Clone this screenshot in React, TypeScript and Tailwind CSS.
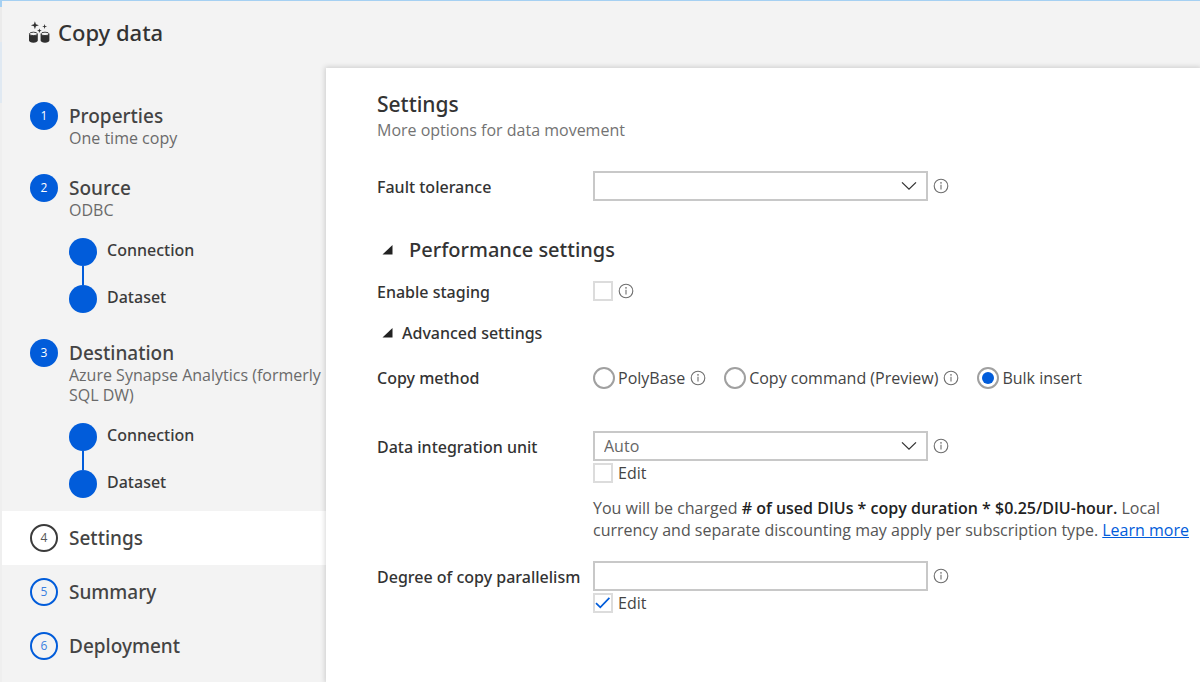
import { useId, useState, type ReactNode } from "react";

type Status = "done" | "current" | "pending";

interface Step {
  title: string;
  detail?: string;
  status: Status;
  children?: string[];
}

const steps: Step[] = [
  { title: "Properties", detail: "One time copy", status: "done" },
  { title: "Source", detail: "ODBC", status: "done", children: ["Connection", "Dataset"] },
  {
    title: "Destination",
    detail: "Azure Synapse Analytics (formerly SQL DW)",
    status: "done",
    children: ["Connection", "Dataset"],
  },
  { title: "Settings", status: "current" },
  { title: "Summary", status: "pending" },
  { title: "Deployment", status: "pending" },
];

const badgeStyles: Record<Status, string> = {
  done: "bg-[#015cda] text-white",
  current: "border-2 border-[#3b3b3b] text-[#555555]",
  pending: "border-2 border-[#015cda] text-[#3b7fe0]",
};

function CopyDataIcon() {
  return (
    <svg width="22" height="24" viewBox="0 0 22 24" aria-hidden="true" className="shrink-0 text-[#2f2f2f]" fill="currentColor">
      <path d="M6.9 1.2 L7.9 4.2 L10.9 5.2 L7.9 6.2 L6.9 9.2 L5.9 6.2 L2.9 5.2 L5.9 4.2Z" />
      <path d="M16.6 4 L17.2 5.9 L19.1 6.5 L17.2 7.1 L16.6 9 L16 7.1 L14.1 6.5 L16 5.9Z" />
      <path d="M11.4 8.4 L12 10.1 L13.7 10.7 L12 11.3 L11.4 13 L10.8 11.3 L9.1 10.7 L10.8 10.1Z" />
      {[1, 12.6].map((x) => (
        <g key={x} transform={`translate(${x} 0)`}>
          <path d="M0 14 V20.6 C0 21.8 1.9 22.7 4.4 22.7 S8.8 21.8 8.8 20.6 V14Z" />
          <ellipse cx="4.4" cy="13.9" rx="4" ry="1.7" fill="#f3f3f3" stroke="currentColor" strokeWidth="0.9" />
        </g>
      ))}
    </svg>
  );
}

function InfoIcon() {
  return (
    <svg width="16" height="16" viewBox="0 0 16 16" role="img" aria-label="Information" className="shrink-0 text-[#6e6e6e]">
      <circle cx="8" cy="8" r="6.8" fill="none" stroke="currentColor" strokeWidth="1.1" />
      <path d="M8 6.8V11.4" stroke="currentColor" strokeWidth="1.1" />
      <circle cx="8" cy="4.9" r="0.8" fill="currentColor" />
    </svg>
  );
}

function Chevron() {
  return (
    <svg width="16" height="10" viewBox="0 0 16 10" fill="none" aria-hidden="true" className="pointer-events-none absolute top-1/2 right-[11px] -translate-y-1/2 text-[#333333]">
      <path d="M1 1.4 L8 8.2 L15 1.4" stroke="currentColor" strokeWidth="1.3" />
    </svg>
  );
}

function Select({ id, options }: { id: string; options: string[] }) {
  return (
    <div className="relative w-[335px]">
      <select id={id} className="block h-[30px] w-full appearance-none rounded-none border-2 border-[#c8c8c8] bg-white pr-8 pl-[9px] text-[16px] leading-6 text-[#666666]">
        {options.map((option) => (
          <option key={option}>{option}</option>
        ))}
      </select>
      <Chevron />
    </div>
  );
}

function Checkbox({ id, label, defaultChecked }: { id?: string; label?: string; defaultChecked?: boolean }) {
  const ownId = useId();
  const boxId = id ?? ownId;
  return (
    <div className="flex h-5 items-center gap-[5px]">
      <span className="relative block size-5">
        <input id={boxId} type="checkbox" defaultChecked={defaultChecked} className="peer block size-5 appearance-none border-2 border-[#dcdcdc] bg-white" />
        <svg viewBox="0 0 20 20" fill="none" aria-hidden="true" className="pointer-events-none absolute inset-0 hidden size-5 text-[#015cda] peer-checked:block">
          <path d="M3 10.2 L7.3 14.4 L16.4 4.8" stroke="currentColor" strokeWidth="1.7" />
        </svg>
      </span>
      {label && <label htmlFor={boxId} className="leading-6">{label}</label>}
    </div>
  );
}

function Radio({ label, checked, onSelect, info }: { label: string; checked: boolean; onSelect: () => void; info?: boolean }) {
  return (
    <div className="flex items-center gap-[5px]">
      <label className="flex items-center gap-[3px]">
        <span className="relative block size-[22px]">
          <input type="radio" name="copy-method" checked={checked} onChange={onSelect} className="peer block size-[22px] appearance-none rounded-full border-2 border-[#a0a0a0] bg-white" />
          <span className="pointer-events-none absolute inset-[5px] hidden rounded-full bg-[#015cda] peer-checked:block" />
        </span>
        {label}
      </label>
      {info && <InfoIcon />}
    </div>
  );
}

function Field({ label, htmlFor, className, children }: { label: string; htmlFor: string; className: string; children: ReactNode }) {
  return (
    <div className={`flex items-start ${className}`}>
      <label htmlFor={htmlFor} className="w-[216px] shrink-0 pt-1 pb-[2px] font-['Noto_Sans',sans-serif] leading-6 font-medium whitespace-nowrap text-[#333333]">
        {label}
      </label>
      <div className="min-w-0 flex-1">{children}</div>
    </div>
  );
}

function Triangle() {
  return (
    <svg width="11" height="11" viewBox="0 0 11 11" aria-hidden="true" className="shrink-0 text-[#222222]">
      <path d="M10.5 0V9.5H0.5Z" fill="currentColor" />
    </svg>
  );
}

function Sidebar() {
  return (
    <nav aria-label="Steps" className="w-[324px] shrink-0 pt-[21px]">
      <ol>
        {steps.map((step, index) => (
          <li key={step.title} aria-current={step.status === "current" ? "step" : undefined} className={`flex items-start gap-[11px] py-[13px] pl-7 ${step.status === "current" ? "bg-white" : ""}`}>
            <span className={`flex size-7 shrink-0 items-center justify-center rounded-full text-[12px] ${badgeStyles[step.status]}`}>{index + 1}</span>
            <div className="min-w-0 flex-1 pt-[2px]">
              <h2 className="font-['Noto_Sans',sans-serif] text-[19px] leading-6 font-medium text-[#444444]">{step.title}</h2>
              {step.detail && <p className="leading-5 text-[#6a6a6a]">{step.detail}</p>}
              {step.children && (
                <ul className="mt-[18px]">
                  {step.children.map((child, i) => (
                    <li key={child} className="flex gap-[10px]">
                      <span className="flex flex-col items-center">
                        <span className="size-7 rounded-full bg-[#015cda]" />
                        {i < step.children!.length - 1 && <span className="h-[19px] w-[2px] bg-[#015cda]" />}
                      </span>
                      <a href="#" className="h-6 font-['Noto_Sans',sans-serif] leading-6 font-medium text-[#3b3b3b]">{child}</a>
                    </li>
                  ))}
                </ul>
              )}
            </div>
          </li>
        ))}
      </ol>
    </nav>
  );
}

export default function App() {
  const [method, setMethod] = useState("Bulk insert");
  return (
    <div className="flex min-h-screen border-t border-[#a5d0f2] bg-[#f3f3f3] font-['Open_Sans',sans-serif] text-[16px] text-[#444444]">
      <div aria-hidden="true" className="w-[2px] shrink-0 bg-[linear-gradient(#a5d0f2_6px,#ebebeb_6px,#ebebeb_41px,#e0e9f2_41px,#e0e9f2_102px,#efefef_102px)]" />
      <div className="flex min-w-0 flex-1 flex-col">
        <header className="flex h-[67px] shrink-0 items-center gap-2 pb-[6px] pl-[26px]">
          <CopyDataIcon />
          <h1 className="font-['Noto_Sans',sans-serif] text-[22px] leading-8 font-medium text-[#333333]">Copy data</h1>
        </header>
        <div className="flex flex-1">
          <Sidebar />
          <main className="min-w-0 flex-1 bg-white pt-[22px] pb-6 pl-[51px] shadow-[0_0_5px_1px_rgba(0,0,0,0.16)]">
            <h2 className="font-['Noto_Sans',sans-serif] text-[21px] leading-7 font-medium text-[#333333]">Settings</h2>
            <p className="leading-6 text-[#737373]">More options for data movement</p>

            <Field label="Fault tolerance" htmlFor="fault" className="mt-[29px]">
              <div className="flex items-center gap-[5px]">
                <Select id="fault" options={[""]} />
                <InfoIcon />
              </div>
            </Field>

            <h3 className="mt-[33px]">
              <button type="button" aria-expanded="true" className="flex items-center gap-4 pl-[5px] font-['Noto_Sans',sans-serif] text-[20px] leading-8 font-medium text-[#333333]">
                <Triangle />
                Performance settings
              </button>
            </h3>

            <Field label="Enable staging" htmlFor="staging" className="mt-[10px]">
              <div className="flex h-[30px] items-center gap-[5px]">
                <Checkbox id="staging" />
                <InfoIcon />
              </div>
            </Field>

            <h4 className="mt-[15px]">
              <button type="button" aria-expanded="true" className="flex items-center gap-[9px] pl-[5px] font-['Noto_Sans',sans-serif] leading-6 font-medium text-[#333333]">
                <Triangle />
                Advanced settings
              </button>
            </h4>

            <fieldset className="mt-[21px] flex h-6 items-center">
              <legend className="float-left w-[216px] shrink-0 font-['Noto_Sans',sans-serif] leading-6 font-medium text-[#333333]">Copy method</legend>
              <div className="flex items-center gap-[18px] whitespace-nowrap">
                {["PolyBase", "Copy command (Preview)", "Bulk insert"].map((name) => (
                  <Radio key={name} label={name} checked={method === name} onSelect={() => setMethod(name)} info={name !== "Bulk insert"} />
                ))}
              </div>
            </fieldset>

            <Field label="Data integration unit" htmlFor="diu" className="mt-[41px]">
              <div className="mb-[2px] flex items-center gap-[5px]">
                <Select id="diu" options={["Auto"]} />
                <InfoIcon />
              </div>
              <Checkbox label="Edit" />
              <p className="mt-[14px] max-w-[604px] leading-[22px] text-[#555555]">
                You will be charged <strong className="font-semibold text-[#222222]"># of used DIUs * copy duration * $0.25/DIU-hour.</strong> Local currency and separate discounting may apply per subscription type.{" "}
                <a href="#" className="text-[#015cda] underline">Learn more</a>
              </p>
            </Field>

            <Field label="Degree of copy parallelism" htmlFor="parallelism" className="mt-5">
              <div className="mb-[2px] flex items-center gap-[5px]">
                <input id="parallelism" type="text" className="block h-[30px] w-[335px] rounded-none border-2 border-[#c8c8c8] bg-white px-[9px]" />
                <InfoIcon />
              </div>
              <Checkbox label="Edit" defaultChecked />
            </Field>
          </main>
        </div>
      </div>
    </div>
  );
}
